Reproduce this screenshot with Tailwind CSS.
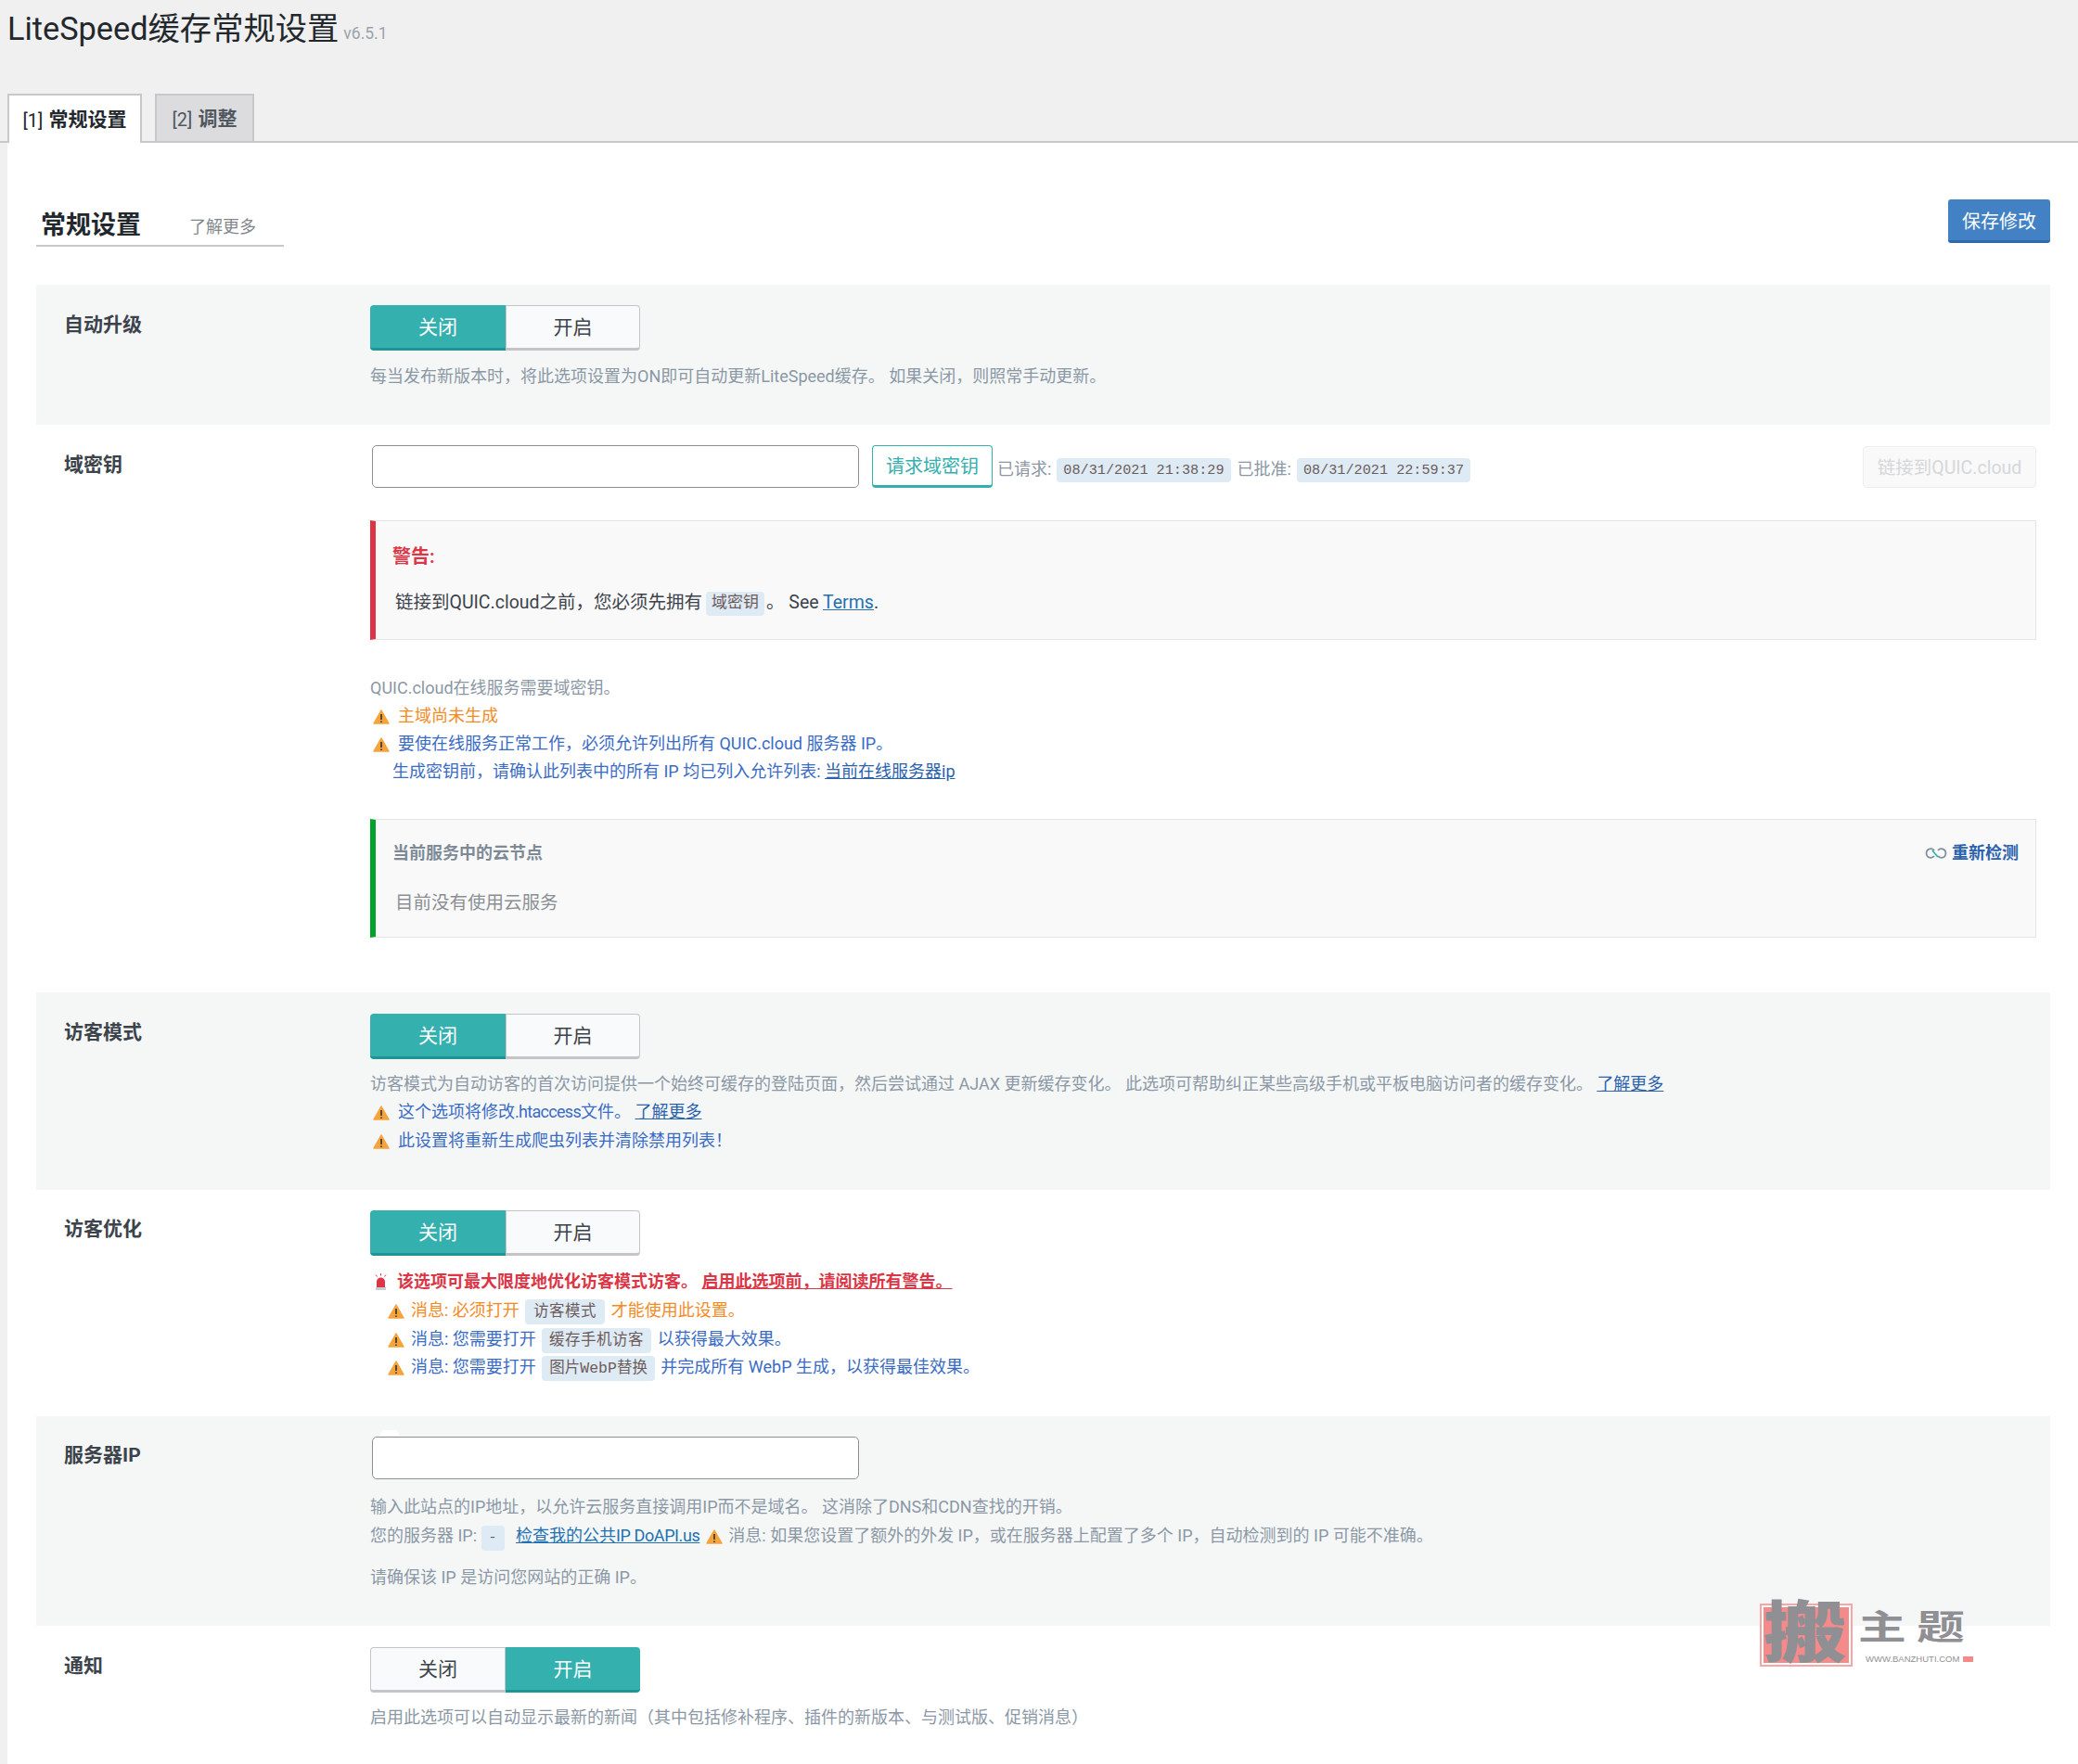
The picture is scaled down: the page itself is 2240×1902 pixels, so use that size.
<!DOCTYPE html>
<html lang="zh-CN">
<head>
<meta charset="utf-8">
<title>LiteSpeed缓存常规设置</title>
<script src="https://cdn.jsdelivr.net/npm/@tailwindcss/browser@4"></script>
</head>
<body class="bg-[#f0f0f0] font-['Roboto','Noto_Sans_CJK_SC',sans-serif] text-[#3c434a] w-[2240px] h-[1902px] overflow-hidden relative">

<header class="h-[101px] pl-[8px] pt-[9px]">
  <h1 class="flex items-end text-[34.3px] leading-[44px] text-[#23282d] font-normal">LiteSpeed缓存常规设置<span class="text-[17.5px] leading-[34px] ml-[5px] text-[#9aa3ad]">v6.5.1</span></h1>
</header>

<nav class="flex items-end h-[53px] pl-[8px] border-b-2 border-[#c8c8ca] relative">
  <a class="relative top-[2px] w-[145px] h-[53px] pt-[2px] flex items-center justify-center gap-[6px] bg-white border-2 border-b-0 border-[#c8c8ca] text-[20px] text-[#23282d]">[1] <b class="font-bold text-[21px]">常规设置</b></a>
  <a class="relative top-[2px] ml-[14px] w-[107px] h-[53px] pt-[2px] flex items-center justify-center gap-[6px] bg-[#dcdcde] border-2 border-b-2 border-[#c8c8ca] text-[20px] text-[#50575e]">[2] <b class="font-bold text-[21px]">调整</b></a>
</nav>

<main class="ml-[8px] bg-white h-[1748px] pl-[31px] pr-[30px] relative">
  <div class="flex items-start justify-between pt-[61px] h-[153px]">
    <div class="flex items-end w-[267px] h-[51px] border-b-2 border-[#c8c8ca] pl-[5px] pb-[2px]">
      <h2 class="relative top-[2px] text-[27px] leading-[42px] font-bold text-[#23282d]">常规设置</h2>
      <a class="ml-[52px] text-[18px] leading-[34px] text-[#82878c]">了解更多</a>
    </div>
    <button class="w-[110px] h-[47px] pt-[3px] bg-[#4282c4] border-b-[3px] border-[#2f6aaa] rounded-[3px] text-white text-[20px]">保存修改</button>
  </div>

  <!-- 自动升级 -->
  <section class="flex bg-[#f5f7f7] h-[151px] pr-[15px]">
    <h3 class="w-[360px] pl-[30px] pt-[28px] text-[21px] leading-[30px] font-bold text-[#3c434a] shrink-0">自动升级</h3>
    <div class="pt-[22px] text-[18px] leading-[30px] text-[#8b97a5]">
      <div class="flex w-[291px] h-[49px] text-[21px]">
        <span class="w-[146px] pt-[2px] flex items-center justify-center bg-[#34b0ae] border-b-[3px] border-[#1f9593] rounded-l-[4px] text-white">关闭</span>
        <span class="w-[145px] pt-[1px] flex items-center justify-center bg-[#f9fafc] border border-b-[3px] border-[#c6c4c8] rounded-r-[4px] text-[#3c434a]">开启</span>
      </div>
      <p class="mt-[13px]">每当发布新版本时，将此选项设置为ON即可自动更新LiteSpeed缓存。 如果关闭，则照常手动更新。</p>
    </div>
  </section>

  <!-- 域密钥 -->
  <section class="flex bg-white h-[612px] pr-[15px]">
    <h3 class="w-[360px] pl-[30px] pt-[28px] text-[21px] leading-[30px] font-bold text-[#3c434a] shrink-0">域密钥</h3>
    <div class="flex-1 pt-[22px] text-[18px] leading-[30px] text-[#8b97a5]">
      <div class="flex items-start h-[81px]">
        <div class="ml-[2px] w-[525px] h-[46px] bg-white border-[1.5px] border-[#8c8f94] rounded-[5px]"></div>
        <button class="ml-[14px] w-[130px] h-[46px] pt-[2px] bg-white border-[1.5px] border-b-[3px] border-[#34b0ae] rounded-[4px] text-[#34b0ae] text-[20px]">请求域密钥</button>
        <span class="ml-[5px] mt-[11px]">已请求:</span>
        <code class="ml-[6px] mt-[14px] h-[26px] px-[7px] bg-[#deebf4] rounded-[4px] text-[15.2px] leading-[26px] font-['Liberation_Mono','Noto_Sans_CJK_SC',monospace] text-[#6d5b5b] whitespace-nowrap">08/31/2021 21:38:29</code>
        <span class="ml-[7px] mt-[11px]">已批准:</span>
        <code class="ml-[6px] mt-[14px] h-[26px] px-[7px] bg-[#deebf4] rounded-[4px] text-[15.2px] leading-[26px] font-['Liberation_Mono','Noto_Sans_CJK_SC',monospace] text-[#6d5b5b] whitespace-nowrap">08/31/2021 22:59:37</code>
        <button class="ml-auto mt-px w-[187px] h-[45px] pt-[2px] bg-[#f9f9f9] border border-[#eeeeee] rounded-[4px] text-[#d5d7d9] text-[19.5px]">链接到QUIC.cloud</button>
      </div>

      <div class="h-[129px] bg-[#f9f9f9] border border-[#e5e5e5] border-l-[6px] border-l-[#dc3545] pl-[18px] pt-[23px]">
        <p class="text-[20px] leading-[30px] font-bold text-[#dc3545]">警告:</p>
        <p class="mt-[18px] ml-[3px] text-[19.5px] leading-[34px] text-[#3c434a]">链接到QUIC.cloud之前，您必须先拥有<code class="ml-[4px] mr-[2px] inline-block h-[26px] px-[6px] bg-[#deebf4] rounded-[4px] text-[17px] leading-[26px] align-[1px] text-[#6d5b5b]">域密钥</code>。 See <a class="text-[#2271b1] underline">Terms</a>.</p>
      </div>

      <div class="mt-[37px] leading-[30px]">
        <p class="h-[30px]">QUIC.cloud在线服务需要域密钥。</p>
        <p class="h-[30px] text-[#f58a1f]"><svg class="inline-block align-[-3px] ml-[3px] mr-[9px]" width="18" height="16" viewBox="0 0 18 16"><path d="M9 1 L17 15 L1 15 Z" fill="#f5a33b" stroke="#f5a33b" stroke-width="1.5" stroke-linejoin="round"/><path d="M9 5 V11 M9 12.5 V14" stroke="#33302c" stroke-width="1.6"/></svg>主域尚未生成</p>
        <p class="h-[30px] text-[#3a6bc5]"><svg class="inline-block align-[-3px] ml-[3px] mr-[9px]" width="18" height="16" viewBox="0 0 18 16"><path d="M9 1 L17 15 L1 15 Z" fill="#f5a33b" stroke="#f5a33b" stroke-width="1.5" stroke-linejoin="round"/><path d="M9 5 V11 M9 12.5 V14" stroke="#33302c" stroke-width="1.6"/></svg>要使在线服务正常工作，必须允许列出所有 QUIC.cloud 服务器 IP。</p>
        <p class="h-[30px] pl-[24px] text-[#3a6bc5]">生成密钥前，请确认此列表中的所有 IP 均已列入允许列表: <a class="text-[#2a62ad] underline">当前在线服务器ip</a></p>
      </div>

      <div class="mt-[36px] h-[128px] bg-[#f9f9f9] border border-[#e5e5e5] border-l-[6px] border-l-[#00a32a] pl-[18px] pr-[18px] pt-[21px]">
        <div class="flex justify-between items-center h-[30px]">
          <b class="text-[18px] font-bold text-[#7d8a96]">当前服务中的云节点</b>
          <a class="flex items-center gap-[5px] text-[18px] font-bold text-[#2a62ad]"><svg width="24" height="14" viewBox="0 0 24 14" fill="none"><path d="M10 4 C8 1.5 2 1 1.5 7 C2 13 8 12.5 10 10" stroke="#7c909f" stroke-width="1.8"/><path d="M14 10 C16 12.5 22 13 22.5 7 C22 1 16 1.5 14 4" stroke="#7c909f" stroke-width="1.8"/><path d="M8 4 L14 11" stroke="#2fb3b5" stroke-width="1.8"/></svg>重新检测</a>
        </div>
        <p class="mt-[24px] ml-[3px] text-[19.5px] leading-[30px] text-[#8b8f94]">目前没有使用云服务</p>
      </div>
    </div>
  </section>

  <!-- 访客模式 -->
  <section class="flex bg-[#f5f7f7] h-[213px] pr-[15px]">
    <h3 class="w-[360px] pl-[30px] pt-[28px] text-[21px] leading-[30px] font-bold text-[#3c434a] shrink-0">访客模式</h3>
    <div class="pt-[23px] text-[18px] leading-[30px] text-[#8b97a5]">
      <div class="flex w-[291px] h-[49px] text-[21px]">
        <span class="w-[146px] pt-[2px] flex items-center justify-center bg-[#34b0ae] border-b-[3px] border-[#1f9593] rounded-l-[4px] text-white">关闭</span>
        <span class="w-[145px] pt-[1px] flex items-center justify-center bg-[#f9fafc] border border-b-[3px] border-[#c6c4c8] rounded-r-[4px] text-[#3c434a]">开启</span>
      </div>
      <p class="mt-[12px] h-[30px]">访客模式为自动访客的首次访问提供一个始终可缓存的登陆页面，然后尝试通过 AJAX 更新缓存变化。 此选项可帮助纠正某些高级手机或平板电脑访问者的缓存变化。 <a class="text-[#2a62ad] underline">了解更多</a></p>
      <p class="h-[31px] text-[#3a6bc5]"><svg class="inline-block align-[-3px] ml-[3px] mr-[9px]" width="18" height="16" viewBox="0 0 18 16"><path d="M9 1 L17 15 L1 15 Z" fill="#f5a33b" stroke="#f5a33b" stroke-width="1.5" stroke-linejoin="round"/><path d="M9 5 V11 M9 12.5 V14" stroke="#33302c" stroke-width="1.6"/></svg>这个选项将修改<span class="tracking-[-0.7px]">.htaccess</span>文件。 <a class="text-[#2a62ad] underline">了解更多</a></p>
      <p class="h-[30px] text-[#3a6bc5]"><svg class="inline-block align-[-3px] ml-[3px] mr-[9px]" width="18" height="16" viewBox="0 0 18 16"><path d="M9 1 L17 15 L1 15 Z" fill="#f5a33b" stroke="#f5a33b" stroke-width="1.5" stroke-linejoin="round"/><path d="M9 5 V11 M9 12.5 V14" stroke="#33302c" stroke-width="1.6"/></svg>此设置将重新生成爬虫列表并清除禁用列表！</p>
    </div>
  </section>

  <!-- 访客优化 -->
  <section class="flex bg-white h-[244px] pr-[15px]">
    <h3 class="w-[360px] pl-[30px] pt-[27px] text-[21px] leading-[30px] font-bold text-[#3c434a] shrink-0">访客优化</h3>
    <div class="pt-[22px] text-[18px] leading-[31px] text-[#8b97a5]">
      <div class="flex w-[291px] h-[49px] text-[21px]">
        <span class="w-[146px] pt-[2px] flex items-center justify-center bg-[#34b0ae] border-b-[3px] border-[#1f9593] rounded-l-[4px] text-white">关闭</span>
        <span class="w-[145px] pt-[1px] flex items-center justify-center bg-[#f9fafc] border border-b-[3px] border-[#c6c4c8] rounded-r-[4px] text-[#3c434a]">开启</span>
      </div>
      <p class="mt-[12px] h-[31px] font-bold text-[#dc3545]"><svg class="inline-block align-[-3px] ml-[4px] mr-[10px]" width="15" height="18" viewBox="0 0 15 18"><path d="M3 15 V9 C3 3 12 3 12 9 V15 Z" fill="#dc3545"/><rect x="2" y="15" width="11" height="3" fill="#c9ccd0"/><path d="M7.5 0 V2.5 M2 1.5 L3.5 3.5 M13 1.5 L11.5 3.5" stroke="#dc3545" stroke-width="1"/></svg>该选项可最大限度地优化访客模式访客。 <a class="underline">启用此选项前，请阅读所有警告。</a></p>
      <p class="h-[31px] pl-[19px] text-[#f58a1f]"><svg class="inline-block align-[-3px] mr-[7px]" width="18" height="16" viewBox="0 0 18 16"><path d="M9 1 L17 15 L1 15 Z" fill="#f5a33b" stroke="#f5a33b" stroke-width="1.5" stroke-linejoin="round"/><path d="M9 5 V11 M9 12.5 V14" stroke="#33302c" stroke-width="1.6"/></svg>消息: 必须打开 <code class="mx-[2px] inline-block h-[27px] px-[9px] bg-[#deebf4] rounded-[4px] text-[16.5px] leading-[27px] text-[#6d5b5b]">访客模式</code> 才能使用此设置。</p>
      <p class="h-[30px] pl-[19px] text-[#3a6bc5]"><svg class="inline-block align-[-3px] mr-[7px]" width="18" height="16" viewBox="0 0 18 16"><path d="M9 1 L17 15 L1 15 Z" fill="#f5a33b" stroke="#f5a33b" stroke-width="1.5" stroke-linejoin="round"/><path d="M9 5 V11 M9 12.5 V14" stroke="#33302c" stroke-width="1.6"/></svg>消息: 您需要打开 <code class="mx-[2px] inline-block h-[27px] px-[8px] bg-[#deebf4] rounded-[4px] text-[16.5px] leading-[27px] text-[#6d5b5b]">缓存手机访客</code> 以获得最大效果。</p>
      <p class="h-[31px] pl-[19px] text-[#3a6bc5]"><svg class="inline-block align-[-3px] mr-[7px]" width="18" height="16" viewBox="0 0 18 16"><path d="M9 1 L17 15 L1 15 Z" fill="#f5a33b" stroke="#f5a33b" stroke-width="1.5" stroke-linejoin="round"/><path d="M9 5 V11 M9 12.5 V14" stroke="#33302c" stroke-width="1.6"/></svg>消息: 您需要打开 <code class="mx-[2px] inline-block h-[27px] px-[8px] bg-[#deebf4] rounded-[4px] text-[16.5px] leading-[27px] font-['Liberation_Mono','Noto_Sans_CJK_SC',monospace] text-[#6d5b5b]">图片WebP替换</code> 并完成所有 WebP 生成，以获得最佳效果。</p>
    </div>
  </section>

  <!-- 服务器IP -->
  <section class="flex bg-[#f5f7f7] h-[226px] pr-[15px]">
    <h3 class="w-[360px] pl-[30px] pt-[27px] text-[21px] leading-[30px] font-bold text-[#3c434a] shrink-0">服务器IP</h3>
    <div class="pt-[22px] text-[18px] leading-[31px] text-[#8b97a5]">
      <div class="relative ml-[2px] w-[525px] h-[46px] bg-white border-[1.5px] border-[#8c8f94] rounded-[5px]">
        <span class="absolute -top-[8px] left-[8px] w-[20px] h-[6px] bg-white rounded-t-[5px]"></span>
      </div>
      <p class="mt-[14px] h-[31px]">输入此站点的IP地址，以允许云服务直接调用IP而不是域名。 这消除了DNS和CDN查找的开销。</p>
      <p class="h-[31px]">您的服务器 IP: <code class="inline-block h-[27px] px-[8px] bg-[#deebf4] rounded-[4px] text-[15px] leading-[27px] font-['Liberation_Mono',monospace] text-[#6d5b5b]">-</code> <a class="ml-[8px] text-[#2271b1] underline">检查我的公共<span class="tracking-[-0.4px]">IP DoAPI.us</span></a> <svg class="inline-block align-[-3px] mx-[2px]" width="18" height="16" viewBox="0 0 18 16"><path d="M9 1 L17 15 L1 15 Z" fill="#f5a33b" stroke="#f5a33b" stroke-width="1.5" stroke-linejoin="round"/><path d="M9 5 V11 M9 12.5 V14" stroke="#33302c" stroke-width="1.6"/></svg> 消息: 如果您设置了额外的外发 IP，或在服务器上配置了多个 IP，自动检测到的 IP 可能不准确。</p>
      <p class="mt-[14px] h-[31px]">请确保该 IP 是访问您网站的正确 IP。</p>
    </div>
  </section>

  <!-- 通知 -->
  <section class="flex bg-white h-[149px] pr-[15px]">
    <h3 class="w-[360px] pl-[30px] pt-[28px] text-[21px] leading-[30px] font-bold text-[#3c434a] shrink-0">通知</h3>
    <div class="pt-[23px] text-[18px] leading-[30px] text-[#8b97a5]">
      <div class="flex w-[291px] h-[49px] text-[21px]">
        <span class="w-[146px] pt-[1px] flex items-center justify-center bg-[#f9fafc] border border-b-[3px] border-[#c6c4c8] rounded-l-[4px] text-[#3c434a]">关闭</span>
        <span class="w-[145px] pt-[2px] flex items-center justify-center bg-[#34b0ae] border-b-[3px] border-[#1f9593] rounded-r-[4px] text-white">开启</span>
      </div>
      <p class="mt-[12px]">启用此选项可以自动显示最新的新闻（其中包括修补程序、插件的新版本、与测试版、促销消息）</p>
    </div>
  </section>
</main>

<!-- watermark -->
<div class="absolute left-[1897px] top-[1729px] w-[232px] h-[70px]">
  <div class="absolute left-0 top-0 w-[100px] h-[68px] bg-white border-[2px] border-[#f7a5a5] p-[2px]">
    <div class="w-full h-full bg-[#f58a8a]"></div>
  </div>
  <span class="absolute left-[4px] -top-[3px] origin-left scale-x-[1.25] text-[72px] leading-[72px] font-black text-[#8f8f94]">搬</span>
  <span class="absolute left-[106px] top-[8px] origin-left scale-x-[1.4] text-[37px] leading-[38px] font-bold text-[#8f8f94]">主</span>
  <span class="absolute left-[169px] top-[8px] origin-left scale-x-[1.4] text-[37px] leading-[38px] font-bold text-[#8f8f94]">题</span>
  <div class="absolute left-[114px] top-[53px] flex items-center gap-[4px] font-['Liberation_Sans',sans-serif] text-[9.5px] leading-[14px] text-[#8f8f94] whitespace-nowrap">WWW.BANZHUTI.COM<span class="w-[11px] h-[6px] bg-[#f58a8a]"></span></div>
</div>
</body>
</html>
